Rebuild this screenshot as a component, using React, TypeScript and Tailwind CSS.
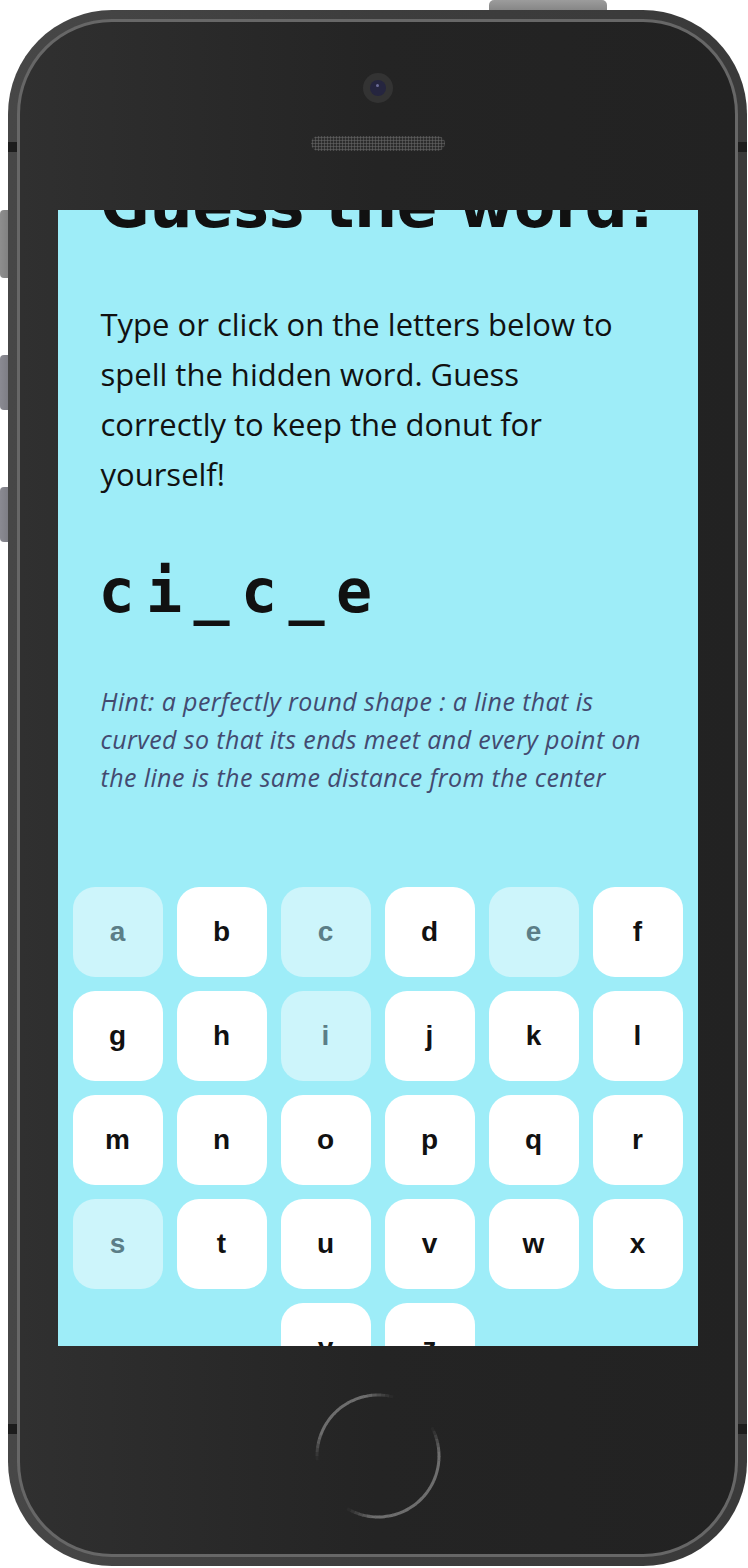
import React from 'react';

const LETTERS = 'abcdefghijklmnopqrstuvwxyz'.split('');
const GUESSED = ['a', 'c', 'e', 'i', 's'];

// arcs of the home button ring, degrees clockwise from 3 o'clock
const RING_ARCS: [number, number][] = [
  [176, 284],
  [-28, 120],
];

function ringOpacity(angle: number) {
  let best = 0;
  for (const [s, e] of RING_ARCS) {
    const span = e - s;
    const d = (((angle - s) % 360) + 360) % 360;
    if (d <= span) {
      const edge = Math.min(d, span - d);
      best = Math.max(best, Math.min(1, edge / 26));
    }
  }
  return best;
}

function HomeButton() {
  const segs = [];
  const r = 61;
  for (let a = 0; a < 360; a += 4) {
    const op = ringOpacity(a + 2);
    if (op <= 0) continue;
    const a1 = (a * Math.PI) / 180;
    const a2 = ((a + 4.4) * Math.PI) / 180;
    const d = `M ${64 + r * Math.cos(a1)} ${64 + r * Math.sin(a1)} A ${r} ${r} 0 0 1 ${64 + r * Math.cos(a2)} ${64 + r * Math.sin(a2)}`;
    segs.push(<path key={a} d={d} stroke="#6e6e6e" strokeWidth={3} fill="none" opacity={op} />);
  }
  return (
    <svg width="128" height="128" viewBox="0 0 128 128" className="mt-[46px]">
      {segs}
    </svg>
  );
}

function Key({ letter }: { letter: string }) {
  const used = GUESSED.includes(letter);
  return (
    <button
      className={`m-[7px] w-[90px] h-[90px] rounded-[22px] flex items-center justify-center text-[28px] font-bold font-['Liberation_Sans',Arial,sans-serif] ${used ? 'bg-[#cdf5fb] text-[#5b7e87]' : 'bg-white text-[#111]'}`}
    >
      {letter}
    </button>
  );
}

function SideKeys() {
  // volume / mute keys on the left edge, tucked behind the body
  return (
    <div className="absolute left-0 top-[210px] flex flex-col">
      <div className="w-[12px] h-[68px] rounded-l-[4px] bg-linear-to-r from-[#8e8e8e] to-[#7c7c7c]" />
      <div className="mt-[77px] w-[12px] h-[55px] rounded-l-[4px] bg-linear-to-r from-[#8a8a92] to-[#78787f]" />
      <div className="mt-[77px] w-[12px] h-[55px] rounded-l-[4px] bg-linear-to-r from-[#8a8a92] to-[#78787f]" />
    </div>
  );
}

export default function App() {
  return (
    <div className="relative w-[748px] h-[1568px] bg-white pt-[10px] pl-[8px] overflow-hidden">
      <div className="absolute left-[489px] top-0 w-[118px] h-[16px] rounded-t-[5px] bg-linear-to-b from-[#9c9c9c] to-[#7a7a7a]" />
      <SideKeys />

      <div className="relative w-[739px] h-[1556px] rounded-[104px] bg-linear-to-r from-[#474747] via-[#3d3d3d] to-[#3a3a3a] p-[9px]">
        {/* antenna notches */}
        <div className="absolute inset-x-0 top-[132px] flex justify-between">
          <div className="w-[9px] h-[10px] bg-[#1d1d1d]" />
          <div className="w-[9px] h-[10px] bg-[#1d1d1d]" />
        </div>
        <div className="absolute inset-x-0 top-[1414px] flex justify-between">
          <div className="w-[9px] h-[10px] bg-[#1d1d1d]" />
          <div className="w-[9px] h-[10px] bg-[#1d1d1d]" />
        </div>

        <div className="h-full rounded-[95px] bg-[#676767] p-[3px]">
          <div className="h-full rounded-[92px] bg-linear-to-r from-[#303030] via-[#242424] to-[#222222] flex flex-col items-center">
            {/* camera */}
            <div className="mt-[51px] w-[30px] h-[30px] rounded-full bg-[#333333] flex items-center justify-center">
              <div className="w-[16px] h-[16px] rounded-full bg-[#25253f] flex justify-center pt-[4px]">
                <div className="w-[3px] h-[3px] rounded-full bg-[#6c6c98]" />
              </div>
            </div>
            {/* speaker */}
            <div className="mt-[33px] w-[134px] h-[15px] rounded-full bg-[#2c2c2c] bg-[radial-gradient(circle,#5c5c5c_0.9px,transparent_1.2px)] bg-[length:3px_3px]" />

            {/* screen */}
            <div className="mt-[59px] w-[640px] h-[1136px] shrink-0 overflow-hidden bg-[#9eedf8]">
              <div className="-mt-[34px]">
                <div className="px-[43px]">
                  <h1 className="whitespace-nowrap text-6xl leading-none font-bold text-[#111] font-['DejaVu_Sans',sans-serif]">
                    Guess the word!
                  </h1>
                  <p className="mt-[63px] pr-[15px] text-[31px] leading-[50px] text-[#111] font-['Open_Sans',sans-serif]">
                    Type or click on the letters below to spell the hidden word. Guess correctly to keep the donut for yourself!
                  </p>
                  <div className="mt-[62px] -ml-[2px] text-6xl leading-none font-bold tracking-[11.4px] text-[#111] font-['DejaVu_Sans_Mono',monospace]">
                    ci_c_e
                  </div>
                  <p className="mt-[61px] italic text-[25px] leading-[38px] tracking-[0.4px] text-[#434a70] font-['Open_Sans',sans-serif]">
                    Hint: a perfectly round shape : a line that is curved so that its ends meet and every point on the line is the same distance from the center
                  </p>
                </div>
                <div className="mt-[84px] flex flex-wrap justify-center">
                  {LETTERS.map((l) => (
                    <Key key={l} letter={l} />
                  ))}
                </div>
              </div>
            </div>

            <HomeButton />
          </div>
        </div>
      </div>
    </div>
  );
}
